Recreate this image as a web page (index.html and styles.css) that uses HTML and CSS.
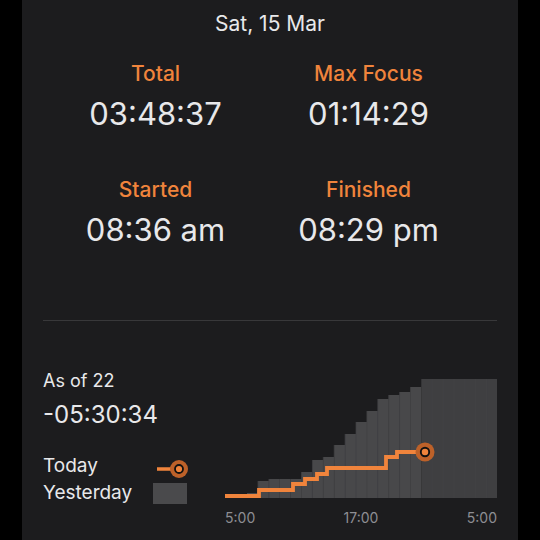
FILE: index.html
```html
<!DOCTYPE html>
<html lang="en">
<head>
  <meta charset="UTF-8">
  <title>Focus day</title>
  <link rel="stylesheet" href="styles.css">
</head>
<body>
  <div class="panel">
    <div class="date">Sat, 15 Mar</div>

    <section class="stats">
      <div class="stat">
        <div class="label">Total</div>
        <div class="value">03:48:37</div>
      </div>
      <div class="stat">
        <div class="label">Max Focus</div>
        <div class="value">01:14:29</div>
      </div>
      <div class="stat">
        <div class="label">Started</div>
        <div class="value">08:36 am</div>
      </div>
      <div class="stat">
        <div class="label">Finished</div>
        <div class="value">08:29 pm</div>
      </div>
    </section>

    <hr class="divider">

    <section class="compare">
      <div class="summary">
        <div class="as-of">As of 22</div>
        <div class="delta">-05:30:34</div>
        <div class="legend">
          <span>Today</span>
          <svg class="today-key" width="35" height="27" viewBox="0 0 35 27">
            <line x1="4" y1="17" x2="26" y2="17" stroke="#f0843c" stroke-width="3.5"/>
            <circle cx="26" cy="17" r="9" fill="#bd6129"/>
            <circle cx="26" cy="17" r="4" fill="#f0843c" stroke="#111" stroke-width="1.8"/>
          </svg>
          <span>Yesterday</span>
          <div class="swatch"></div>
        </div>
      </div>

      <div class="chart">
        <svg width="273" height="125" viewBox="224 375 273 125">
          <g fill="#48484a">
            <rect x="247" y="493" width="11" height="5"/>
            <rect x="257.9" y="481" width="11" height="17"/>
            <rect x="268.8" y="479" width="11" height="19"/>
            <rect x="279.7" y="479" width="11" height="19"/>
            <rect x="290.6" y="479" width="11" height="19"/>
            <rect x="301.5" y="472" width="11" height="26"/>
            <rect x="312.4" y="460" width="11" height="38"/>
            <rect x="323.3" y="457" width="11" height="41"/>
            <rect x="334.2" y="445" width="11" height="53"/>
            <rect x="345.1" y="434" width="11" height="64"/>
            <rect x="356" y="422" width="11" height="76"/>
            <rect x="366.9" y="411" width="11" height="87"/>
            <rect x="377.8" y="399" width="11" height="99"/>
            <rect x="388.7" y="395" width="11" height="103"/>
            <rect x="399.6" y="392" width="11" height="106"/>
            <rect x="410.5" y="387" width="10.8" height="111"/>
          </g>
          <rect x="421.3" y="379" width="75.7" height="119" fill="#3f3f41"/>
          <g stroke="#414143" stroke-width="0.7">
            <line x1="258" y1="481" x2="258" y2="498"/>
            <line x1="269" y1="479" x2="269" y2="498"/>
            <line x1="301.5" y1="472" x2="301.5" y2="498"/>
            <line x1="312.4" y1="460" x2="312.4" y2="498"/>
            <line x1="323.3" y1="457" x2="323.3" y2="498"/>
            <line x1="334.2" y1="445" x2="334.2" y2="498"/>
            <line x1="345.1" y1="434" x2="345.1" y2="498"/>
            <line x1="356" y1="422" x2="356" y2="498"/>
            <line x1="366.9" y1="411" x2="366.9" y2="498"/>
            <line x1="377.8" y1="399" x2="377.8" y2="498"/>
            <line x1="388.7" y1="395" x2="388.7" y2="498"/>
            <line x1="399.6" y1="392" x2="399.6" y2="498"/>
            <line x1="410.5" y1="387" x2="410.5" y2="498"/>
          </g>
          <g stroke="#444446" stroke-width="0.7">
            <line x1="432.2" y1="379" x2="432.2" y2="498"/>
            <line x1="443.1" y1="379" x2="443.1" y2="498"/>
            <line x1="454" y1="379" x2="454" y2="498"/>
            <line x1="464.9" y1="379" x2="464.9" y2="498"/>
            <line x1="475.8" y1="379" x2="475.8" y2="498"/>
            <line x1="486.7" y1="379" x2="486.7" y2="498"/>
          </g>
          <path d="M225 496 H259 V490 H293 V484 H305 V479 H317 V474 H327 V468 H386 V457 H397 V452 H425"
                fill="none" stroke="#f0843c" stroke-width="3.8" stroke-linejoin="miter"/>
          <circle cx="425" cy="452" r="9.5" fill="#bd6129"/>
          <circle cx="425" cy="452" r="4.2" fill="#f0843c" stroke="#111" stroke-width="1.9"/>
        </svg>
        <div class="axis">
          <span>5:00</span>
          <span>17:00</span>
          <span>5:00</span>
        </div>
      </div>
    </section>
  </div>
</body>
</html>
```

FILE: styles.css
```css
body {
  margin: 0;
  background-color: #000000;
  font-family: Inter, 'Noto Sans', sans-serif;
  color: #e8e8ea;
}
.panel {
  box-sizing: border-box;
  width: 496px;
  min-height: 540px;
  margin: 0 auto;
  padding: 12px 21px 0 21px;
  background-color: #1c1c1e;
}
.date {
  text-align: center;
  font-size: 21px;
  line-height: 24px;
}
.stats {
  display: grid;
  grid-template-columns: 213px 213px;
  row-gap: 45px;
  margin: 26px 0 0 6px;
  text-align: center;
}
.label {
  color: #f0843c;
  font-size: 21px;
  font-weight: 500;
  line-height: 24px;
}
.value {
  margin-top: 9px;
  font-size: 31px;
  line-height: 38px;
}
.divider {
  margin: 71px 0 0 0;
  border: 0;
  height: 1px;
  background-color: #38383a;
}
.compare {
  display: flex;
}
.summary {
  width: 181px;
  padding-top: 49px;
}
.as-of {
  font-size: 18px;
  line-height: 22px;
}
.delta {
  margin-top: 8px;
  font-size: 24px;
  line-height: 29px;
}
.legend {
  display: grid;
  grid-template-columns: 110px 35px;
  align-items: center;
  margin-top: 23px;
  font-size: 19px;
  line-height: 27px;
}
.today-key {
  display: block;
}
.swatch {
  width: 34px;
  height: 21px;
  margin-top: 2px;
  background-color: #4a4a4c;
}
.chart {
  width: 273px;
  padding-top: 54px;
}
.chart svg {
  display: block;
}
.axis {
  display: flex;
  justify-content: space-between;
  margin-top: 9px;
  padding-left: 1px;
  font-size: 14px;
  line-height: 17px;
  color: #8e8e93;
}
```
